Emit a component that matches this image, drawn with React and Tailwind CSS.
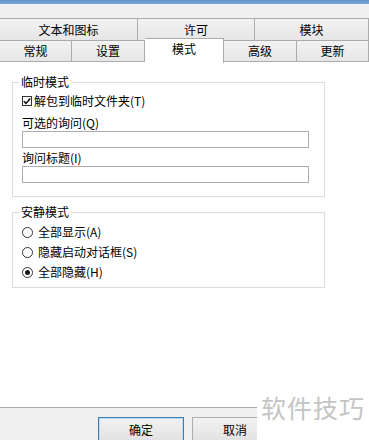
import React from "react";

const font = { fontFamily: '"Noto Sans CJK SC", "Noto Sans", sans-serif' };

function Tab({ w, children, last }) {
  return (
    <div
      className={`flex items-center justify-center border-t border-r border-[#acacac] bg-linear-to-b from-[#f3f3f3] to-[#e6e6e6] text-[12px] leading-none text-black`}
      style={{ width: w }}
    >
      {children}
    </div>
  );
}

function Group({ title, children, className }) {
  return (
    <div className={`relative ml-[12px] w-[313px] border border-[#dcdcdc] ${className}`}>
      <span className="absolute left-[6px] top-[-9px] bg-white px-[2px] text-[12px] leading-[16px] text-black">
        {title}
      </span>
      {children}
    </div>
  );
}

function Radio({ checked, label }) {
  return (
    <div className="flex h-[20px] items-center pl-[9px]">
      <div className="flex h-[11px] w-[11px] items-center justify-center rounded-full border border-[#333333] bg-white">
        {checked && <div className="h-[5px] w-[5px] rounded-full bg-[#1a1a1a]" />}
      </div>
      <span className="ml-[5px] text-[12px] leading-[16px] text-black">{label}</span>
    </div>
  );
}

export default function App() {
  return (
    <div className="relative h-[440px] w-[369px] overflow-hidden bg-[#f0f0f0]" style={font}>
      <div className="h-[4px] bg-linear-to-b from-[#5d92c9] to-[#7aa9d9]" />
      <div className="h-[14px]" />
      <div className="flex h-[22px]">
        <Tab w={138}>文本和图标</Tab>
        <Tab w={117}>许可</Tab>
        <Tab w={114}>模块</Tab>
      </div>
      <div className="relative flex h-[21px]">
        <Tab w={72}>常规</Tab>
        <Tab w={73}>设置</Tab>
        <div className="relative z-10 -mt-[2px] flex h-[25px] w-[79px] items-start justify-center border-t border-r border-[#acacac] bg-white pt-[4px] text-[12px] leading-none text-black">
          模式
        </div>
        <Tab w={73}>高级</Tab>
        <Tab w={72}>更新</Tab>
      </div>
      <div className="h-[347px] border-t border-b border-t-[#acacac] border-b-[#a9a9a9] bg-white pt-[20px]">
        <Group title="临时模式" className="h-[115px]">
          <div className="pt-[10px]">
            <div className="flex h-[16px] items-center pl-[9px]">
              <div className="flex h-[10px] w-[10px] items-center justify-center border border-[#333333] bg-white">
                <svg width="8" height="8" viewBox="0 0 8 8">
                  <path d="M0.8 4.2 L3 6.4 L7.2 1.4" fill="none" stroke="#111" strokeWidth="1.6" />
                </svg>
              </div>
              <span className="ml-[2px] text-[12px] leading-[16px] text-black">解包到临时文件夹(T)</span>
            </div>
            <div className="mt-[6px] h-[16px] pl-[9px] text-[12px] leading-[16px] text-black">可选的询问(Q)</div>
            <div className="ml-[9px] h-[17px] w-[287px] border border-[#abadb3] bg-white" />
            <div className="mt-[2px] h-[16px] pl-[9px] text-[12px] leading-[16px] text-black">询问标题(I)</div>
            <div className="ml-[9px] h-[17px] w-[287px] border border-[#abadb3] bg-white" />
          </div>
        </Group>
        <Group title="安静模式" className="mt-[15px] h-[76px]">
          <div className="pt-[9px]">
            <Radio label="全部显示(A)" />
            <Radio label="隐藏启动对话框(S)" />
            <Radio checked label="全部隐藏(H)" />
          </div>
        </Group>
      </div>
      <div className="flex pl-[98px] pt-[9px]">
        <div className="flex h-[25px] w-[86px] items-center justify-center border border-[#3c7fb1] bg-linear-to-b from-[#f2f2f2] to-[#e2e2e2] text-[12px] text-black shadow-[inset_0_0_0_1px_#b6dbf5]">
          确定
        </div>
        <div className="ml-[8px] flex h-[25px] w-[86px] items-center justify-center border border-[#adadad] bg-linear-to-b from-[#f2f2f2] to-[#e2e2e2] text-[12px] text-black">
          取消
        </div>
      </div>
      <div className="absolute bottom-0 right-0 flex h-[33px] w-[112px] items-start pl-[4px]">
        <div className="absolute inset-0 bg-white" />
      </div>
      <div className="absolute right-0 top-[392px] w-[112px] pl-[4px] text-[25px] leading-[30px] tracking-[1px] text-[#c4c4c4]">
        软件技巧
      </div>
    </div>
  );
}
